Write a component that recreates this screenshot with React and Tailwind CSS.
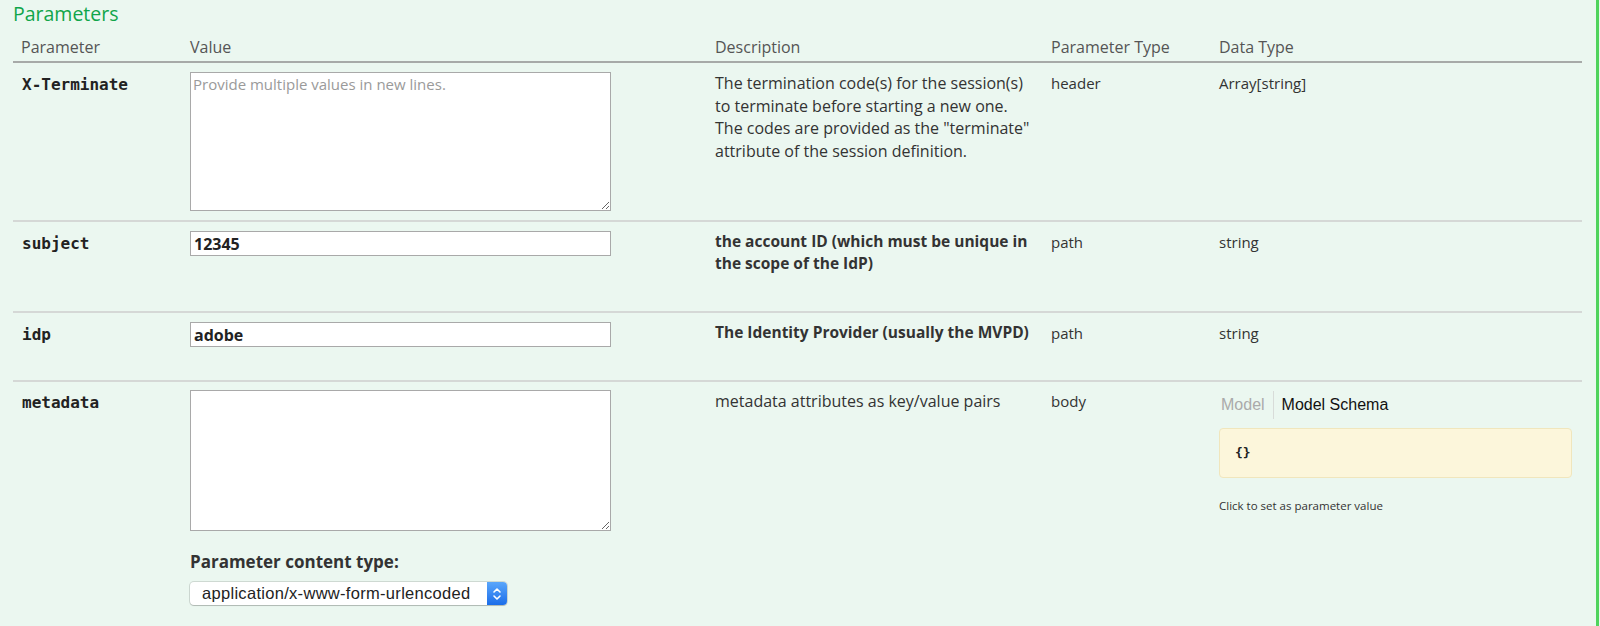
import React from "react";

const sans = "font-['Open_Sans',sans-serif]";
const mono = "font-['DejaVu_Sans_Mono',monospace]";

function Row({ name, value, desc, ptype, dtype, minH }) {
  return (
    <div className={`flex border-t-2 border-[#d5d8d6] ${minH}`}>
      <div className="w-[177px] pl-[9px] pt-[9px]">
        <span className={`${mono} font-bold text-[16px] leading-[20px] text-[#222]`}>{name}</span>
      </div>
      <div className="w-[525px] pt-[9px]">{value}</div>
      <div className="w-[336px] pt-[9px] pr-[20px]">{desc}</div>
      <div className="w-[168px] pt-[9px] text-[15px] leading-[22px] text-[#333]">{ptype}</div>
      <div className="flex-1 pt-[9px] pr-[10px] text-[15px] leading-[22px] text-[#333]">{dtype}</div>
    </div>
  );
}

function TextArea({ placeholder, h }) {
  return (
    <textarea
      placeholder={placeholder}
      className={`block w-[421px] ${h} bg-white border border-[#a9a9a9] px-[2px] py-[1px] text-[15px] leading-[20px] ${sans} placeholder:text-[#9a9a9a] outline-none`}
    />
  );
}

function Input({ value }) {
  return (
    <input
      readOnly
      value={value}
      className={`block w-[421px] h-[25px] bg-white border border-[#a9a9a9] px-[3px] text-[16px] font-bold text-[#222] ${sans} outline-none`}
    />
  );
}

export default function App() {
  return (
    <div className={`w-[1600px] h-[626px] bg-[#ebf7f0] overflow-hidden flex ${sans}`}>
      <div className="flex-1 pl-[13px] pr-[14px]">
        <div className="h-[30px] pt-[2px] text-[19.5px] leading-[24px] text-[#10a54a]">Parameters</div>
        <div className="mt-[7px] flex border-b-2 border-[#a7aaa8] pb-[4px] text-[16px] leading-[20px] text-[#555]">
          <div className="w-[177px] pl-[8px]">Parameter</div>
          <div className="w-[525px]">Value</div>
          <div className="w-[336px]">Description</div>
          <div className="w-[168px]">Parameter Type</div>
          <div className="flex-1">Data Type</div>
        </div>
        <div className="flex pb-[9px] min-h-[157px]">
          <div className="w-[177px] pl-[9px] pt-[9px]">
            <span className={`${mono} font-bold text-[16px] leading-[20px] text-[#222]`}>X-Terminate</span>
          </div>
          <div className="w-[525px] pt-[9px]">
            <TextArea placeholder="Provide multiple values in new lines." h="h-[139px]" />
          </div>
          <div className="w-[336px] pt-[9px] pr-[20px] text-[16px] leading-[22.5px] text-[#333]">
            The termination code(s) for the session(s) to terminate before starting a new one. The codes are provided as the "terminate" attribute of the session definition.
          </div>
          <div className="w-[168px] pt-[9px] text-[15px] leading-[22px] text-[#333]">header</div>
          <div className="flex-1 pt-[9px] text-[15px] leading-[22px] text-[#333]">Array[string]</div>
        </div>
        <Row
          name="subject"
          minH="h-[91px]"
          value={<Input value="12345" />}
          desc={<p className="text-[15.5px] leading-[21.5px] font-bold text-[#333]">the account ID (which must be unique in the scope of the IdP)</p>}
          ptype="path"
          dtype="string"
        />
        <Row
          name="idp"
          minH="h-[69px]"
          value={<Input value="adobe" />}
          desc={<p className="text-[15.5px] leading-[21.5px] font-bold text-[#333]">The Identity Provider (usually the MVPD)</p>}
          ptype="path"
          dtype="string"
        />
        <div className="flex border-t-2 border-[#d5d8d6] h-[300px]">
          <div className="w-[177px] pl-[9px] pt-[8px]">
            <span className={`${mono} font-bold text-[16px] leading-[20px] text-[#222]`}>metadata</span>
          </div>
          <div className="w-[525px] pt-[8px]">
            <TextArea h="h-[141px]" />
            <div className="mt-[21px] text-[17px] leading-[20px] font-bold text-[#333]">Parameter content type:</div>
            <div className="mt-[10px] w-[317px] h-[23px] flex items-stretch bg-white rounded-[4px] shadow-[0_0_0_1px_rgba(0,0,0,0.12),0_1px_1px_rgba(0,0,0,0.15)] overflow-hidden">
              <div className="flex-1 pl-[12px] flex items-center text-[16.5px] tracking-[0.3px] text-[#222] font-['Liberation_Sans',sans-serif]">
                application/x-www-form-urlencoded
              </div>
              <div className="w-[20px] bg-gradient-to-b from-[#5aa6fb] to-[#1a6de9] flex items-center justify-center">
                <svg width="10" height="16" viewBox="0 0 10 16" fill="none" stroke="white" strokeWidth="1.6" strokeLinecap="round" strokeLinejoin="round">
                  <path d="M2 6 L5 3 L8 6" />
                  <path d="M2 10 L5 13 L8 10" />
                </svg>
              </div>
            </div>
          </div>
          <div className="w-[336px] pt-[8px] pr-[20px] text-[16px] leading-[22px] text-[#333]">metadata attributes as key/value pairs</div>
          <div className="w-[168px] pt-[8px] text-[15px] leading-[22px] text-[#333]">body</div>
          <div className="flex-1 pt-[9px] pr-[10px]">
            <div className="flex h-[28px] items-center font-['Liberation_Sans',sans-serif] text-[16px]">
              <span className="pl-[2px] pr-[8px] text-[#aaa]">Model</span>
              <span className="h-[28px] border-l border-[#d8dcd9] pl-[8px] flex items-center text-[#111]">Model Schema</span>
            </div>
            <div className="mt-[9px] h-[50px] rounded-[4px] border border-[#f0e6bd] bg-[#fcf6db] flex items-center pl-[15px]">
              <span className={`${mono} font-bold text-[13px] text-[#222]`}>{"{}"}</span>
            </div>
            <div className="mt-[20px] text-[11.5px] leading-[16px] text-[#333]">Click to set as parameter value</div>
          </div>
        </div>
      </div>
      <div className="w-[3px] bg-[#4fd35c]" />
      <div className="w-[1px] bg-[#e8f6ec]" />
    </div>
  );
}
